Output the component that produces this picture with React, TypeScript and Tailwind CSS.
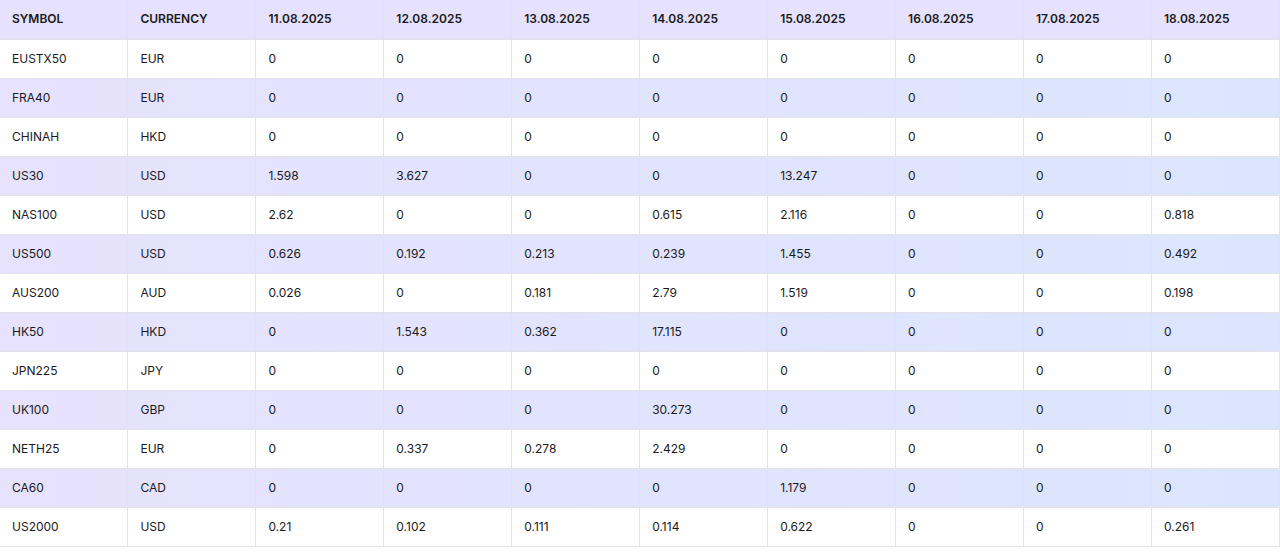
const dates = ["11.08.2025", "12.08.2025", "13.08.2025", "14.08.2025", "15.08.2025", "16.08.2025", "17.08.2025", "18.08.2025"]

const rows: [string, string, string[]][] = [
  ["EUSTX50", "EUR", ["0", "0", "0", "0", "0", "0", "0", "0"]],
  ["FRA40", "EUR", ["0", "0", "0", "0", "0", "0", "0", "0"]],
  ["CHINAH", "HKD", ["0", "0", "0", "0", "0", "0", "0", "0"]],
  ["US30", "USD", ["1.598", "3.627", "0", "0", "13.247", "0", "0", "0"]],
  ["NAS100", "USD", ["2.62", "0", "0", "0.615", "2.116", "0", "0", "0.818"]],
  ["US500", "USD", ["0.626", "0.192", "0.213", "0.239", "1.455", "0", "0", "0.492"]],
  ["AUS200", "AUD", ["0.026", "0", "0.181", "2.79", "1.519", "0", "0", "0.198"]],
  ["HK50", "HKD", ["0", "1.543", "0.362", "17.115", "0", "0", "0", "0"]],
  ["JPN225", "JPY", ["0", "0", "0", "0", "0", "0", "0", "0"]],
  ["UK100", "GBP", ["0", "0", "0", "30.273", "0", "0", "0", "0"]],
  ["NETH25", "EUR", ["0", "0.337", "0.278", "2.429", "0", "0", "0", "0"]],
  ["CA60", "CAD", ["0", "0", "0", "0", "1.179", "0", "0", "0"]],
  ["US2000", "USD", ["0.21", "0.102", "0.111", "0.114", "0.622", "0", "0", "0.261"]],
]

export default function App() {
  return (
    <div className="w-[1280px] h-[560px] overflow-hidden bg-white font-[Inter] text-[12px] text-[#1a1a1a]">
      <table className="w-full table-fixed border-collapse">
        <thead>
          <tr className="h-[39px] bg-[#e6e1fd]">
            {["SYMBOL", "CURRENCY", ...dates].map((h) => (
              <th key={h} className="px-3 text-left font-semibold border-x border-b border-[#e2e2e8] first:border-l-0">
                {h}
              </th>
            ))}
          </tr>
        </thead>
        <tbody>
          {rows.map(([sym, cur, vals], i) => (
            <tr
              key={sym}
              className={`h-[39px] ${i % 2 === 1 ? "bg-gradient-to-r from-[#e7e2fd] to-[#dbe6fd]" : "bg-white"}`}
            >
              {[sym, cur, ...vals].map((v, j) => (
                <td key={j} className="px-3 border-x border-b border-[#e2e2e8] first:border-l-0">
                  {v}
                </td>
              ))}
            </tr>
          ))}
        </tbody>
      </table>
    </div>
  )
}
